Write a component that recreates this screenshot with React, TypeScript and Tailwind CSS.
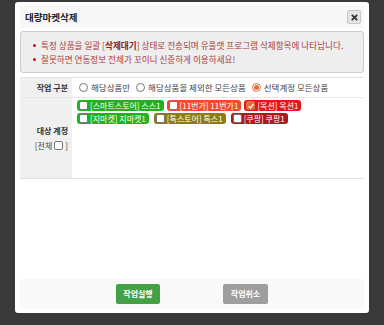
import React from 'react';

const font = { fontFamily: '"Noto Sans CJK KR", "Noto Sans", sans-serif' };

interface IBadge {
  label: string;
  color: string;
  checked?: boolean;
}

const row1: IBadge[] = [
  { label: '[스마트스토어] 스스1', color: 'bg-[#22b022]' },
  { label: '[11번가] 11번가1', color: 'bg-[#f44a2c]' },
  { label: '[옥션] 옥션1', color: 'bg-[#e8141c]', checked: true },
];

const row2: IBadge[] = [
  { label: '[지마켓] 지마켓1', color: 'bg-[#22b022]' },
  { label: '[톡스토어] 톡스1', color: 'bg-[#8c7c12]' },
  { label: '[쿠팡] 쿠팡1', color: 'bg-[#b3161c]' },
];

const Check = ({ checked }: { checked?: boolean }) =>
  checked ? (
    <span className="w-[9px] h-[9px] rounded-[2px] bg-[#e0703a] flex items-center justify-center">
      <svg viewBox="0 0 10 10" className="w-[8px] h-[8px]">
        <path d="M2 5.2 L4.2 7.4 L8 2.6" stroke="white" strokeWidth="1.6" fill="none" />
      </svg>
    </span>
  ) : (
    <span className="w-[9px] h-[9px] rounded-[2px] bg-white border border-[#777]" />
  );

const Badge = ({ badge }: { badge: IBadge }) => (
  <div className={`${badge.color} h-[11px] rounded-[3px] flex items-center gap-[2px] pl-[2px] pr-[3px] text-white text-[8px] leading-none`}>
    <Check checked={badge.checked} />
    <span>{badge.label}</span>
  </div>
);

const Radio = ({ label, checked }: { label: string; checked?: boolean }) => (
  <div className="flex items-center gap-[3px]">
    {checked ? (
      <span className="w-[9px] h-[9px] rounded-full border border-[#e0703a] flex items-center justify-center bg-white">
        <span className="w-[5px] h-[5px] rounded-full bg-[#e0703a]" />
      </span>
    ) : (
      <span className="w-[9px] h-[9px] rounded-full border border-[#777] bg-white" />
    )}
    <span>{label}</span>
  </div>
);

const App = () => {
  return (
    <div className="w-[384px] h-[325px] bg-[#3a3a3a] overflow-hidden px-[15px] pt-[2px]" style={font}>
      <div className="h-[311px] bg-white rounded-[3px] px-[5px] pt-[4px] pb-[4px] flex flex-col">
        <div className="h-[22px] bg-[#f7f7f7] flex items-center justify-between pl-[5px] pr-[3px]">
          <span className="text-[9.5px] font-bold text-[#222]">대량마켓삭제</span>
          <div className="w-[14px] h-[14px] bg-[#e4e4e4] border border-[#c8c8c8] rounded-[2px] flex items-center justify-center">
            <svg viewBox="0 0 10 10" className="w-[9px] h-[9px]">
              <path d="M2 2 L8 8 M8 2 L2 8" stroke="#333" strokeWidth="2" />
            </svg>
          </div>
        </div>

        <div className="mt-[3px] h-[42px] bg-[#eeeeee] border border-[#cccccc] rounded-[3px] pl-[12px] pt-[6px] text-[8.6px] text-[#a83c3c] leading-[14px]">
          <div className="flex items-center gap-[5px]">
            <span className="w-[3px] h-[3px] rounded-full bg-[#c41010]" />
            <span>
              특정 상품을 일괄 [<b className="text-[#8a2020]">삭제대기</b>] 상태로 전송되며 유플랫 프로그램 삭제항목에 나타납니다.
            </span>
          </div>
          <div className="flex items-center gap-[5px]">
            <span className="w-[3px] h-[3px] rounded-full bg-[#c41010]" />
            <span>잘못하면 연동정보 전체가 꼬이니 신중하게 이용하세요!</span>
          </div>
        </div>

        <div className="mt-[4px] border-t border-b border-[#e2e2e2] text-[8px] text-[#333]">
          <div className="flex h-[20px] border-b border-[#e8e8e8]">
            <div className="w-[52px] bg-[#f0f0f0] flex items-center justify-end pr-[4px] font-bold">작업 구분</div>
            <div className="flex items-center gap-[6px] pl-[7px] text-[8.5px] text-[#444]">
              <Radio label="해당상품만" />
              <Radio label="해당상품을 제외한 모든상품" />
              <Radio label="선택계정 모든상품" checked />
            </div>
          </div>
          <div className="flex h-[80px]">
            <div className="w-[52px] bg-[#f0f0f0] flex flex-col items-end justify-center pr-[4px] gap-[3px]">
              <span className="font-bold">대상 계정</span>
              <span className="flex items-center gap-[2px] text-[#444]">
                [전체 <span className="w-[9px] h-[9px] rounded-[2px] bg-white border border-[#777]" /> ]
              </span>
            </div>
            <div className="flex flex-col gap-[2px] pl-[5px] pt-[2px]">
              <div className="flex gap-[3px]">
                {row1.map((b, i) => (
                  <Badge key={i} badge={b} />
                ))}
              </div>
              <div className="flex gap-[5px]">
                {row2.map((b, i) => (
                  <Badge key={i} badge={b} />
                ))}
              </div>
            </div>
          </div>
        </div>

        <div className="flex-1" />

        <div className="h-[30px] bg-[#f9f9f9] flex items-center justify-center gap-[63px]">
          <button className="w-[44px] h-[20px] bg-[#43a047] rounded-[2px] text-white text-[8px] font-bold">작업실행</button>
          <button className="w-[45px] h-[20px] bg-[#9e9e9e] rounded-[2px] text-white text-[8px] font-bold">작업취소</button>
        </div>
      </div>
    </div>
  );
};

export default App;
